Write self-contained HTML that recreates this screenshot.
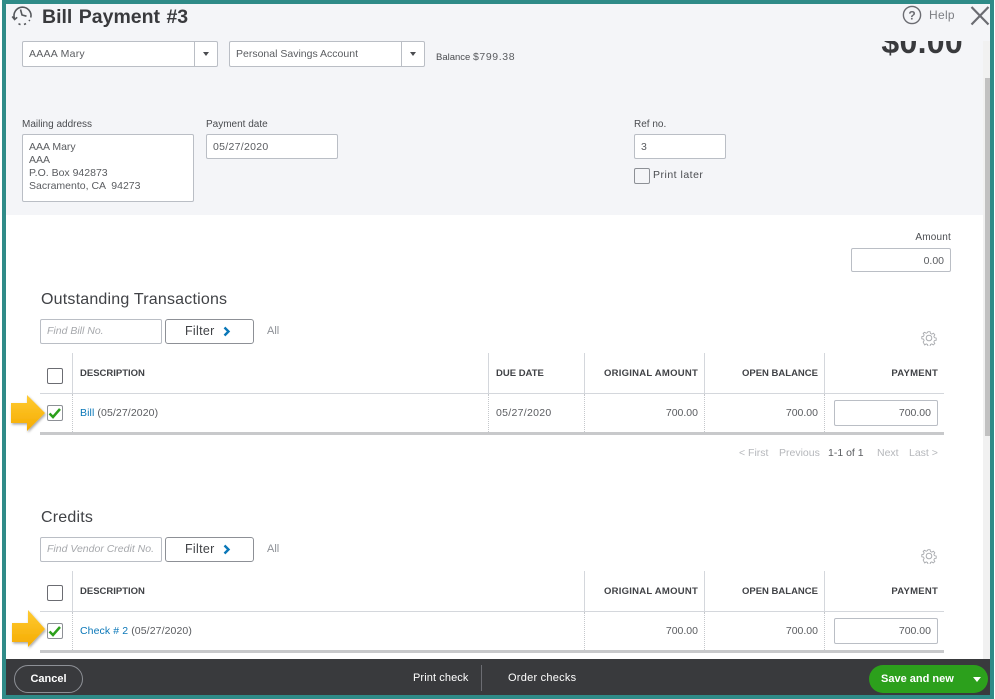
<!DOCTYPE html>
<html><head><meta charset="utf-8">
<style>
html,body{margin:0;padding:0;background:#fff}
#r{position:relative;width:995px;height:699px;overflow:hidden;background:#fff;font-family:"Liberation Sans",sans-serif;color:#555}
#r div{position:absolute;box-sizing:border-box;white-space:nowrap}
.t{font-size:10.5px;line-height:13px;color:#5a5c60;transform:translateY(1px)}
.l{font-size:10px;line-height:12px;color:#4a4c50;transform:translateY(1px)}
.b{background:#fff;border:1px solid #babec5;border-radius:2px}
.h{font-size:9.5px;line-height:12px;font-weight:bold;color:#404246;transform:translateY(1px)}
.r{text-align:right}
.v{width:1px;background:#d4d7dc}
.d{width:0;border-left:1px dotted #c5c8cc}
.hl{height:1px;background:#d4d7dc}
.g{height:3px;background:#c8c9cb}
.link{color:#0a77b8}
.p{font-size:10.5px;line-height:13px;color:#b5b7bb}
.w{font-size:11px;line-height:14px;color:#fff}
</style></head><body><div id="r">
<div style="left:6px;top:4px;width:984px;height:211px;background:#f4f5f8"></div>
<div style="left:983px;top:41px;width:7px;height:618px;background:#f1f1f1"></div>
<div style="left:985px;top:78px;width:5px;height:358px;background:#c1c1c1"></div>

<svg style="position:absolute;left:11px;top:5px" width="23" height="22" viewBox="0 0 23 22" fill="none" stroke="#55585c" stroke-width="1.6"><path d="M3.500 13.500A8.500 8.500 0 1 1 19.800 12.500"/><path d="M1.200 11.500L3.600 14.500L6.200 12.300"/><path d="M7.500 18.800L9.500 19.600M13 19.500L15 18.600M18 16L18.800 15"/><path d="M9.500 4.500L11 10L15.500 11.200"/></svg>
<div style="left:42px;top:5px;font-size:19.5px;line-height:24px;font-weight:bold;color:#393a3d;word-spacing:1px">Bill Payment #3</div>

<svg style="position:absolute;left:902px;top:5px" width="20" height="20" viewBox="0 0 20 20" fill="none"><circle cx="10" cy="10" r="8.600" stroke="#6b6c72" stroke-width="1.400"/><text x="10" y="14.300" text-anchor="middle" font-family="Liberation Sans" font-size="12" font-weight="bold" fill="#6b6c72">?</text></svg>
<div style="left:929px;top:8px;font-size:12px;line-height:15px;color:#7c7e83;letter-spacing:.3px">Help</div>
<svg style="position:absolute;left:970px;top:6px" width="20" height="20" viewBox="0 0 20 20" stroke="#6b6c72" stroke-width="2.200"><path d="M1.500 1L18.500 18.500M18.500 1L1.500 18.500"/></svg>

<div style="left:861px;top:41px;width:102px;height:18px;overflow:hidden">
  <div style="right:0;top:-16px;font-size:32px;line-height:34px;font-weight:bold;color:#393a3d;letter-spacing:.3px">$0.00</div>
</div>

<div class="b" style="left:22px;top:41px;width:196px;height:26px"></div>
<div class="v" style="left:194px;top:42px;height:24px;background:#babec5"></div>
<div style="left:203px;top:52px;border-left:3.500px solid transparent;border-right:3.500px solid transparent;border-top:4px solid #4a4c50"></div>
<div class="t" style="left:29px;top:47px;letter-spacing:.25px">AAAA Mary</div>
<div class="b" style="left:229px;top:41px;width:196px;height:26px"></div>
<div class="v" style="left:401px;top:42px;height:24px;background:#babec5"></div>
<div style="left:410px;top:52px;border-left:3.500px solid transparent;border-right:3.500px solid transparent;border-top:4px solid #4a4c50"></div>
<div class="t" style="left:236px;top:47px">Personal Savings Account</div>
<div class="l" style="left:436px;top:50px;font-size:9.500px">Balance <span style="font-size:10.500px;color:#5a5c60;letter-spacing:.6px">$799.38</span></div>

<div class="l" style="left:22px;top:118px">Mailing address</div>
<div class="b" style="left:22px;top:134px;width:172px;height:68px"></div>
<div class="t" style="left:29px;top:140px">AAA Mary</div>
<div class="t" style="left:29px;top:153px">AAA</div>
<div class="t" style="left:29px;top:166px">P.O. Box 942873</div>
<div class="t" style="left:29px;top:179px;white-space:pre">Sacramento, CA  94273</div>

<div class="l" style="left:206px;top:118px">Payment date</div>
<div class="b" style="left:206px;top:134px;width:132px;height:25px"></div>
<div class="t" style="left:213px;top:140px;letter-spacing:.3px">05/27/2020</div>

<div class="l" style="left:634px;top:118px">Ref no.</div>
<div class="b" style="left:634px;top:134px;width:92px;height:25px"></div>
<div class="t" style="left:641px;top:140px">3</div>
<div style="left:634px;top:168px;width:16px;height:16px;border:1px solid #8d9096;border-radius:2px;background:#f4f5f8"></div>
<div class="t" style="left:653px;top:168px;letter-spacing:.5px;color:#4a4c50">Print later</div>

<div class="l r" style="left:851px;top:231px;width:100px;letter-spacing:.2px">Amount</div>
<div class="b" style="left:851px;top:248px;width:100px;height:24px"></div>
<div class="t r" style="left:851px;top:254px;width:93px">0.00</div>

<!-- Outstanding -->
<div style="left:41px;top:291px;font-size:16px;line-height:18px;color:#404246;letter-spacing:.2px">Outstanding Transactions</div>
<div class="b" style="left:40px;top:319px;width:122px;height:25px"></div>
<div style="left:47px;top:325px;font-size:10.500px;line-height:13px;font-style:italic;color:#a6a8ac">Find Bill No.</div>
<div style="left:165px;top:319px;width:89px;height:25px;border:1px solid #8d9096;border-radius:3px;background:#fff"></div>
<div style="left:185px;top:324px;font-size:12.500px;line-height:15px;color:#404246;letter-spacing:.3px">Filter</div>
<svg style="position:absolute;left:223px;top:326px" width="8" height="11" viewBox="0 0 8 11" fill="none" stroke="#0a77b8" stroke-width="2.400"><path d="M1.500 1.500L5.500 5.500L1.500 9.500"/></svg>
<div style="left:267px;top:325px;font-size:11px;line-height:13px;color:#8d9096">All</div>
<svg style="position:absolute;left:921px;top:330px" width="16" height="16" viewBox="0 0 16 16" fill="none" stroke="#a9abaf" stroke-width="1"><circle cx="8" cy="8" r="2.800"/><path d="M6.800 1h2.400l.4 2 1.500.7 1.800-1 1.600 1.700-1.100 1.700.6 1.500 2 .5v2.400l-2 .4-.6 1.500 1.100 1.700-1.700 1.600-1.700-1.100-1.500.6-.4 2H6.800l-.4-2-1.500-.6-1.700 1.100L1.500 12.500l1.100-1.700-.6-1.500-2-.4V6.500l2-.5.6-1.500-1.100-1.700L3.200 1.700l1.700 1 1.500-.7z" transform="translate(.8 .8) scale(.9)"/></svg>

<div class="v" style="left:72px;top:353px;height:40px"></div>
<div class="v" style="left:488px;top:353px;height:40px"></div>
<div class="v" style="left:584px;top:353px;height:40px"></div>
<div class="v" style="left:704px;top:353px;height:40px"></div>
<div class="v" style="left:824px;top:353px;height:40px"></div>
<div style="left:47px;top:368px;width:16px;height:16px;border:1px solid #6b6c72;border-radius:2px;background:#fff"></div>
<div class="h" style="left:80px;top:367px">DESCRIPTION</div>
<div class="h" style="left:496px;top:367px">DUE DATE</div>
<div class="h r" style="left:590px;top:367px;width:108px;letter-spacing:.25px">ORIGINAL AMOUNT</div>
<div class="h r" style="left:710px;top:367px;width:108px">OPEN BALANCE</div>
<div class="h r" style="left:830px;top:367px;width:108px;letter-spacing:.25px">PAYMENT</div>
<div class="hl" style="left:40px;top:393px;width:904px"></div>
<div class="d" style="left:72px;top:394px;height:38px"></div>
<div class="d" style="left:488px;top:394px;height:38px"></div>
<div class="d" style="left:584px;top:394px;height:38px"></div>
<div class="d" style="left:704px;top:394px;height:38px"></div>
<div class="d" style="left:824px;top:394px;height:38px"></div>
<div class="g" style="left:40px;top:432px;width:904px"></div>

<svg style="position:absolute;left:8px;top:392px" width="42" height="44" viewBox="0 0 42 44"><defs><linearGradient id="y" x1="0" y1="0" x2="0" y2="1"><stop offset="0" stop-color="#ffcb33"/><stop offset="1" stop-color="#f5ab00"/></linearGradient><filter id="s" x="-20%" y="-20%" width="150%" height="150%"><feDropShadow dx="1" dy="1.500" stdDeviation="1.200" flood-color="#000" flood-opacity=".35"/></filter></defs><path d="M3 11H19V3L37 21L19 39V31H3Z" fill="url(#y)" filter="url(#s)"/></svg>
<div style="left:47px;top:405px;width:16px;height:16px;border:1px solid #8d9096;border-radius:2px;background:#fff"></div>
<svg style="position:absolute;left:48px;top:406px" width="14" height="14" viewBox="0 0 14 14" fill="none" stroke="#2ca01c" stroke-width="2.500"><path d="M1.500 7.500L5 11L12 3"/></svg>
<div class="t" style="left:80px;top:406px;letter-spacing:.1px"><span class="link">Bill</span> (05/27/2020)</div>
<div class="t" style="left:496px;top:406px;letter-spacing:.3px">05/27/2020</div>
<div class="t r" style="left:590px;top:406px;width:108px">700.00</div>
<div class="t r" style="left:710px;top:406px;width:108px">700.00</div>
<div class="b" style="left:834px;top:400px;width:104px;height:26px"></div>
<div class="t r" style="left:834px;top:406px;width:97px">700.00</div>

<div class="p" style="left:739px;top:447px">&lt; First</div>
<div class="p" style="left:779px;top:447px">Previous</div>
<div class="p" style="left:828px;top:447px;color:#5a5c60">1-1 of 1</div>
<div class="p" style="left:877px;top:447px">Next</div>
<div class="p" style="left:909px;top:447px">Last &gt;</div>

<!-- Credits -->
<div style="left:41px;top:509px;font-size:16px;line-height:18px;color:#404246;letter-spacing:.2px">Credits</div>
<div class="b" style="left:40px;top:537px;width:122px;height:25px"></div>
<div style="left:47px;top:543px;font-size:10.500px;line-height:13px;font-style:italic;color:#a6a8ac">Find Vendor Credit No.</div>
<div style="left:165px;top:537px;width:89px;height:25px;border:1px solid #8d9096;border-radius:3px;background:#fff"></div>
<div style="left:185px;top:542px;font-size:12.500px;line-height:15px;color:#404246;letter-spacing:.3px">Filter</div>
<svg style="position:absolute;left:223px;top:544px" width="8" height="11" viewBox="0 0 8 11" fill="none" stroke="#0a77b8" stroke-width="2.400"><path d="M1.500 1.500L5.500 5.500L1.500 9.500"/></svg>
<div style="left:267px;top:543px;font-size:11px;line-height:13px;color:#8d9096">All</div>
<svg style="position:absolute;left:921px;top:548px" width="16" height="16" viewBox="0 0 16 16" fill="none" stroke="#a9abaf" stroke-width="1"><circle cx="8" cy="8" r="2.800"/><path d="M6.800 1h2.400l.4 2 1.500.7 1.800-1 1.600 1.700-1.100 1.700.6 1.500 2 .5v2.400l-2 .4-.6 1.500 1.100 1.700-1.700 1.600-1.700-1.100-1.500.6-.4 2H6.800l-.4-2-1.500-.6-1.700 1.100L1.500 12.500l1.100-1.700-.6-1.500-2-.4V6.500l2-.5.6-1.500-1.100-1.700L3.200 1.700l1.700 1 1.500-.7z" transform="translate(.8 .8) scale(.9)"/></svg>

<div class="v" style="left:72px;top:571px;height:40px"></div>
<div class="v" style="left:584px;top:571px;height:40px"></div>
<div class="v" style="left:704px;top:571px;height:40px"></div>
<div class="v" style="left:824px;top:571px;height:40px"></div>
<div style="left:47px;top:585px;width:16px;height:16px;border:1px solid #6b6c72;border-radius:2px;background:#fff"></div>
<div class="h" style="left:80px;top:585px">DESCRIPTION</div>
<div class="h r" style="left:590px;top:585px;width:108px;letter-spacing:.25px">ORIGINAL AMOUNT</div>
<div class="h r" style="left:710px;top:585px;width:108px">OPEN BALANCE</div>
<div class="h r" style="left:830px;top:585px;width:108px;letter-spacing:.25px">PAYMENT</div>
<div class="hl" style="left:40px;top:611px;width:904px"></div>
<div class="d" style="left:72px;top:612px;height:38px"></div>
<div class="d" style="left:584px;top:612px;height:38px"></div>
<div class="d" style="left:704px;top:612px;height:38px"></div>
<div class="d" style="left:824px;top:612px;height:38px"></div>
<div class="g" style="left:40px;top:650px;width:904px"></div>

<svg style="position:absolute;left:8px;top:610px" width="42" height="42" viewBox="0 0 42 42"><path d="M4 13H20V0L37 19L20 37V32H4Z" fill="url(#y)" filter="url(#s)"/></svg>
<div style="left:47px;top:623px;width:16px;height:16px;border:1px solid #8d9096;border-radius:2px;background:#fff"></div>
<svg style="position:absolute;left:48px;top:624px" width="14" height="14" viewBox="0 0 14 14" fill="none" stroke="#2ca01c" stroke-width="2.500"><path d="M1.500 7.500L5 11L12 3"/></svg>
<div class="t" style="left:80px;top:624px;letter-spacing:.1px"><span class="link">Check # 2</span> (05/27/2020)</div>
<div class="t r" style="left:590px;top:624px;width:108px">700.00</div>
<div class="t r" style="left:710px;top:624px;width:108px">700.00</div>
<div class="b" style="left:834px;top:618px;width:104px;height:26px"></div>
<div class="t r" style="left:834px;top:624px;width:97px">700.00</div>

<!-- footer -->
<div style="left:6px;top:659px;width:984px;height:36px;background:#393a3d"></div>
<div style="left:14px;top:665px;width:69px;height:28px;border:1px solid #8d9096;border-radius:14px"></div>
<div class="w" style="left:14px;top:672px;width:69px;text-align:center;font-weight:bold">Cancel</div>
<div class="w" style="left:413px;top:671px;letter-spacing:.1px">Print check</div>
<div style="left:481px;top:665px;width:1px;height:26px;background:#6b6c72"></div>
<div class="w" style="left:508px;top:671px;letter-spacing:.25px">Order checks</div>
<div style="left:869px;top:665px;width:119px;height:28px;background:#2ca01c;border-radius:14px"></div>
<div class="w" style="left:881px;top:672px;font-weight:bold">Save and new</div>
<div style="left:973px;top:677px;border-left:4px solid transparent;border-right:4px solid transparent;border-top:5px solid #fff"></div>

<!-- frame -->
<div style="left:2px;top:0;width:992px;height:4px;background:#2f8b88"></div>
<div style="left:2px;top:0;width:4px;height:699px;background:#2f8b88"></div>
<div style="left:990px;top:0;width:4px;height:699px;background:#2f8b88"></div>
<div style="left:2px;top:695px;width:992px;height:4px;background:#2f8b88"></div>
</div></body></html>
